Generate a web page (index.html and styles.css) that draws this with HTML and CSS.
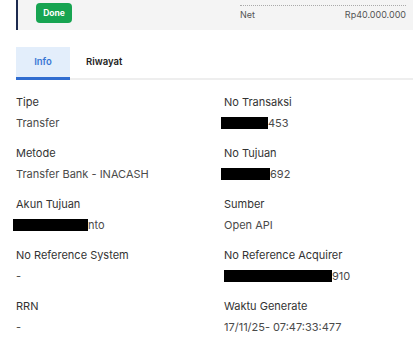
FILE: index.html
```html
<!DOCTYPE html>
<html lang="en">
  <head>
    <meta charset="UTF-8" />
    <title>Detail Transaksi</title>
    <link rel="stylesheet" href="styles.css">
  </head>
  <body>
    <div class="summary">
      <div class="summary-left">
        <span class="badge">Done</span>
      </div>
      <div class="summary-right">
        <div class="sum-row sum-cut"><span></span><span>(Rp0)</span></div>
        <div class="sum-row sum-net"><span>Net</span><span>Rp40.000.000</span></div>
      </div>
    </div>

    <div class="tabs">
      <div class="tab active">Info</div>
      <div class="tab">Riwayat</div>
    </div>

    <div class="info-grid">
      <div class="field">
        <div class="label">Tipe</div>
        <div class="value">Transfer</div>
      </div>
      <div class="field">
        <div class="label">No Transaksi</div>
        <div class="value"><span class="redact shift" style="width: 47px"></span>453</div>
      </div>
      <div class="field">
        <div class="label">Metode</div>
        <div class="value">Transfer Bank - INACASH</div>
      </div>
      <div class="field">
        <div class="label">No Tujuan</div>
        <div class="value"><span class="redact shift" style="width: 49px"></span>692</div>
      </div>
      <div class="field">
        <div class="label">Akun Tujuan</div>
        <div class="value"><span class="redact shift" style="width: 75px"></span>nto</div>
      </div>
      <div class="field">
        <div class="label">Sumber</div>
        <div class="value">Open API</div>
      </div>
      <div class="field">
        <div class="label">No Reference System</div>
        <div class="value">-</div>
      </div>
      <div class="field">
        <div class="label">No Reference Acquirer</div>
        <div class="value"><span class="redact" style="width: 108px"></span>910</div>
      </div>
      <div class="field">
        <div class="label">RRN</div>
        <div class="value">-</div>
      </div>
      <div class="field">
        <div class="label">Waktu Generate</div>
        <div class="value">17/11/25- 07:47:33:477</div>
      </div>
    </div>
  </body>
</html>
```

FILE: styles.css
```css
body {
  margin: 0;
  font-family: Inter, "Noto Sans", sans-serif;
  background: white;
  color: #333;
  overflow: hidden;
}
.summary {
  display: flex;
  justify-content: space-between;
  margin-left: 16px;
  margin-top: -11px;
  height: 41px;
  background: #f4f4f4;
  border-left: 2px solid #1c2a4f;
}
.summary-left {
  display: flex;
  align-items: flex-end;
  padding: 0 0 7px 18px;
}
.badge {
  display: inline-block;
  width: 36px;
  height: 20px;
  line-height: 20px;
  text-align: center;
  background: #17a451;
  color: white;
  font-size: 8.5px;
  font-weight: 700;
  border-radius: 4px;
}
.summary-right {
  width: 166px;
  margin-right: 7px;
  font-size: 9px;
  color: #555;
}
.sum-row {
  display: flex;
  justify-content: space-between;
}
.sum-cut {
  height: 17px;
  box-sizing: border-box;
  padding-bottom: 5px;
  line-height: 11px;
  align-items: flex-end;
  border-bottom: 1px dotted #aaa;
}
.sum-net {
  margin-top: 3px;
  line-height: 12px;
}
.tabs {
  display: flex;
  margin: 17px 0 0 16px;
  border-bottom: 2px solid #eeeeee;
}
.tab {
  padding: 0 16px;
  height: 30px;
  line-height: 30px;
  font-size: 9.5px;
  font-weight: 600;
  color: #222;
  margin-bottom: -2px;
  border-bottom: 3px solid transparent;
}
.tab.active {
  width: 54px;
  padding: 0;
  text-align: center;
  background: #e3eefb;
  color: #3a78d4;
  border-bottom-color: #2f6cd0;
}
.info-grid {
  display: grid;
  grid-template-columns: 208px 1fr;
  row-gap: 9px;
  padding: 12px 0 0 16px;
}
.label,
.value {
  font-size: 11px;
  line-height: 21px;
  white-space: nowrap;
}
.label {
  color: #333;
}
.value {
  color: #4a4a4a;
}
.redact {
  display: inline-block;
  height: 12px;
  vertical-align: -2px;
  background: black;
}
.redact.shift {
  margin-left: -3px;
}
```
